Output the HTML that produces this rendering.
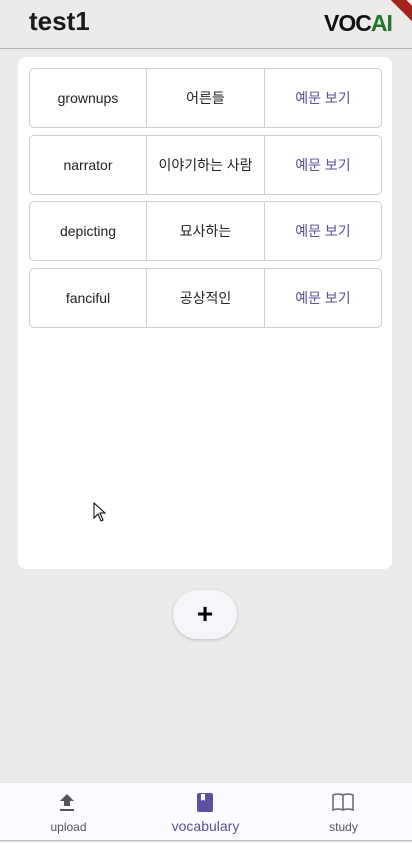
<!DOCTYPE html>
<html><head><meta charset="utf-8"><style>
*{box-sizing:border-box;margin:0;padding:0}
body{width:412px;height:843px;background:#ecebe9;font-family:"Liberation Sans","Noto Sans CJK KR",sans-serif;position:relative;overflow:hidden}
.hdr{position:absolute;left:0;top:0;width:412px;height:49px;border-bottom:1px solid #b5b5b5}
.t{position:absolute;left:29px;top:6px;font-size:26px;font-weight:bold;color:#1a1a1a}
.logo{position:absolute;left:324px;top:10px;font-size:23px;font-weight:900;letter-spacing:-1px;color:#111}
.logo span{color:#1e7a2a}
.ribbon{position:absolute;right:-30px;top:-2px;width:80px;height:11px;background:#a5221d;transform:rotate(45deg)}
.card{position:absolute;left:18px;top:57px;width:374px;height:512px;background:#fff;border-radius:8px}
.row{position:absolute;left:11px;width:353px;height:60px;border:1px solid #cfcfcf;border-radius:5px;display:flex}
.row div{flex:none;display:flex;align-items:center;justify-content:center;font-size:14px;color:#222;border-right:1px solid #cfcfcf}
.row div:nth-child(1){width:117px}.row div:nth-child(2){width:118px}
.row div:nth-child(3){flex:1;border:none;color:#5b4f96}
.fab{position:absolute;left:173px;top:590px;width:64px;height:49px;border-radius:25px;background:#f6f5fa;box-shadow:0 1px 3px rgba(0,0,0,.2);text-align:center;font-size:28px;line-height:48px;font-weight:bold}
.nav{position:absolute;left:0;top:783px;width:412px;height:58px;background:#fdfbff;border-bottom:1px solid #bbb}
.it{position:absolute;top:0;width:137px;text-align:center;font-size:12px;color:#555}
.it svg{position:absolute;top:9px}
.it p{position:absolute;width:100%;top:37px}
</style></head><body>
<div class="hdr"><div class="t">test1</div><div class="logo">VOC<span>AI</span></div><div class="ribbon"></div></div>
<div class="card">
<div class="row" style="top:11px"><div>grownups</div><div>어른들</div><div>예문 보기</div></div>
<div class="row" style="top:78px"><div>narrator</div><div>이야기하는 사람</div><div>예문 보기</div></div>
<div class="row" style="top:144px"><div>depicting</div><div>묘사하는</div><div>예문 보기</div></div>
<div class="row" style="top:211px"><div>fanciful</div><div>공상적인</div><div>예문 보기</div></div>
</div>
<div class="fab">+</div>
<div class="nav">
<div class="it" style="left:0"><svg style="left:58px" width="18" height="20" viewBox="0 0 18 20"><path d="M9 2 L16 9 H12 V14 H6 V9 H2 Z" fill="#555"/><rect x="2" y="17" width="14" height="2" fill="#555"/></svg><p>upload</p></div>
<div class="it" style="left:137px;color:#5b4f96;font-size:14px"><svg style="left:59px" width="18" height="20" viewBox="0 0 18 20"><rect x="1" y="1" width="16" height="19" rx="2" fill="#5e4fa0"/><path d="M5 2 V9 L7 7.5 L9 9 V2Z" fill="#fff"/></svg><p style="top:35px">vocabulary</p></div>
<div class="it" style="left:275px"><svg style="left:57px" width="22" height="20" viewBox="0 0 22 20"><path d="M1 3 Q6 1 11 3 Q16 1 21 3 V18 Q16 16 11 18 Q6 16 1 18 Z M11 3 V18" fill="none" stroke="#666" stroke-width="1.5"/></svg><p>study</p></div>
</div>
<svg style="position:absolute;left:93px;top:502px" width="14" height="20" viewBox="0 0 14 20"><path d="M1 1 V16 L5 12 L8 19 L10 18 L7 11 H12 Z" fill="#fff" stroke="#000" stroke-width="1"/></svg>
</body></html>
